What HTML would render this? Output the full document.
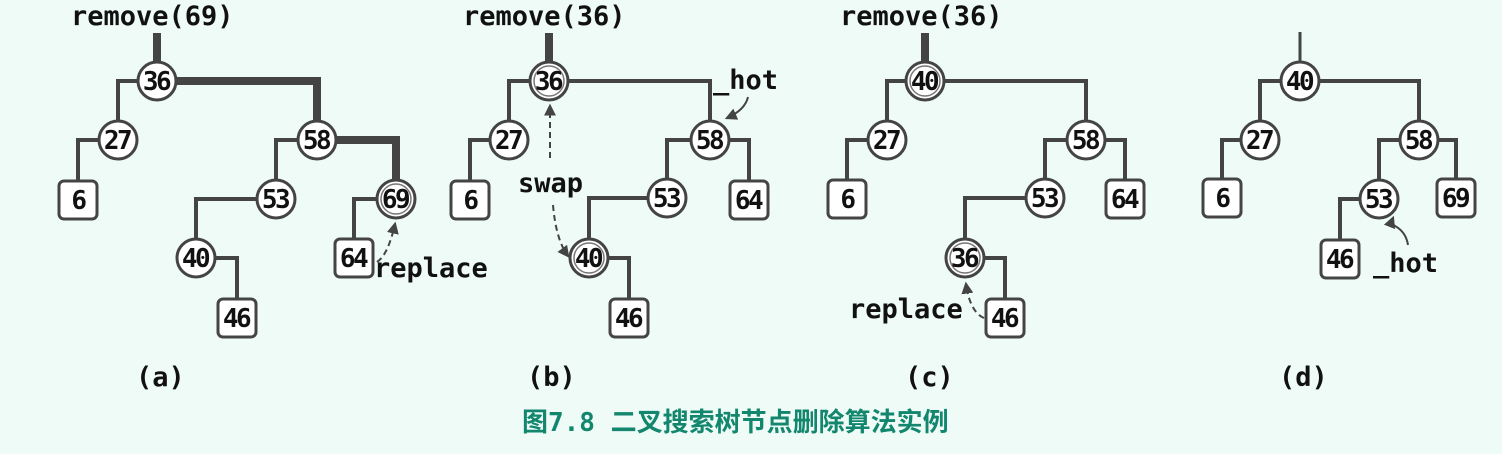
<!DOCTYPE html>
<html><head><meta charset="utf-8"><style>
html,body{margin:0;padding:0;background:#eefbf6;}
svg{display:block;}
text{font-family:"DejaVu Sans Mono","Liberation Mono",monospace;font-weight:bold;fill:#111;}
.n{font-size:26px;text-anchor:middle;letter-spacing:-2.5px;font-weight:bold;}
.l{font-size:27px;}
.e{fill:none;stroke:#444;stroke-width:4;}
.t{fill:none;stroke:#444;stroke-width:8;}
.c{fill:#fff;stroke:#444;stroke-width:3;}
.d{fill:none;stroke:#444;stroke-width:2;stroke-dasharray:6 4;}
</style></head><body>
<svg width="1502" height="454" viewBox="0 0 1502 454">
<defs>
<marker id="ar" viewBox="0 0 10 10" refX="8" refY="5" markerWidth="6" markerHeight="6" orient="auto"><path d="M0,0 L10,5 L0,10 z" fill="#444"/></marker>
</defs>
<!-- Tree (a) -->
<text class="l" x="71" y="25">remove(69)</text>
<path class="t" d="M157 33V62"/>
<path class="e" d="M157 81H118V140 M118 140H78V200 M317 140H276V199 M276 199H196V258 M196 258H237V318 M396 199H354V258"/>
<path class="t" d="M157 81H317V140 M317 140H396V199"/>
<circle class="c" cx="157" cy="81" r="19"/><text class="n" x="156" y="90">36</text>
<circle class="c" cx="118" cy="140" r="19"/><text class="n" x="117" y="149">27</text>
<circle class="c" cx="317" cy="140" r="19"/><text class="n" x="316" y="149">58</text>
<circle class="c" cx="276" cy="199" r="19"/><text class="n" x="275" y="208">53</text>
<circle class="c" cx="396" cy="199" r="19"/><circle cx="396" cy="199" r="15" fill="none" stroke="#777" stroke-width="1.5"/><text class="n" x="395" y="208">69</text>
<circle class="c" cx="196" cy="258" r="19"/><text class="n" x="195" y="267">40</text>
<rect class="c" x="59" y="181" width="38" height="38" rx="5"/><text class="n" x="78" y="209">6</text>
<rect class="c" x="335" y="239" width="38" height="38" rx="5"/><text class="n" x="353" y="267">64</text>
<rect class="c" x="218" y="299" width="38" height="38" rx="5"/><text class="n" x="236" y="327">46</text>
<path class="d" d="M377 262Q388 255 395 224" marker-end="url(#ar)"/>
<text class="l" x="374" y="277">replace</text>
<text class="l" x="136" y="386">(a)</text>

<!-- Tree (b) -->
<text class="l" x="463" y="25">remove(36)</text>
<path class="t" d="M549 33V62"/>
<path class="e" d="M549 81H509V140 M509 140H470V200 M549 81H710V140 M710 140H667V198 M710 140H749V200 M667 198H589V258 M589 258H629V318"/>
<circle class="c" cx="549" cy="81" r="19"/><circle cx="549" cy="81" r="15" fill="none" stroke="#777" stroke-width="1.5"/><text class="n" x="548" y="90">36</text>
<circle class="c" cx="509" cy="140" r="19"/><text class="n" x="508" y="149">27</text>
<circle class="c" cx="710" cy="140" r="19"/><text class="n" x="709" y="149">58</text>
<circle class="c" cx="667" cy="198" r="19"/><text class="n" x="666" y="207">53</text>
<circle class="c" cx="589" cy="258" r="19"/><circle cx="589" cy="258" r="15" fill="none" stroke="#777" stroke-width="1.5"/><text class="n" x="588" y="267">40</text>
<rect class="c" x="451" y="181" width="38" height="38" rx="5"/><text class="n" x="470" y="209">6</text>
<rect class="c" x="730" y="181" width="38" height="38" rx="5"/><text class="n" x="748" y="209">64</text>
<rect class="c" x="610" y="299" width="38" height="38" rx="5"/><text class="n" x="628" y="327">46</text>
<path class="d" d="M550 158V106" marker-end="url(#ar)"/>
<path class="d" d="M553 205Q556 240 568 256" marker-end="url(#ar)"/>
<text class="l" x="518" y="192">swap</text>
<text class="l" x="713" y="89">_hot</text>
<path fill="none" stroke="#444" stroke-width="2" d="M748 97Q745 110 727 118" marker-end="url(#ar)"/>
<text class="l" x="527" y="386">(b)</text>

<!-- Tree (c) -->
<text class="l" x="840" y="25">remove(36)</text>
<path class="t" d="M925 33V62"/>
<path class="e" d="M925 81H887V140 M887 140H847V199 M925 81H1086V140 M1086 140H1045V198 M1086 140H1125V199 M1045 198H965V258 M965 258H1005V318"/>
<circle class="c" cx="925" cy="81" r="19"/><circle cx="925" cy="81" r="15" fill="none" stroke="#777" stroke-width="1.5"/><text class="n" x="924" y="90">40</text>
<circle class="c" cx="887" cy="140" r="19"/><text class="n" x="886" y="149">27</text>
<circle class="c" cx="1086" cy="140" r="19"/><text class="n" x="1085" y="149">58</text>
<circle class="c" cx="1045" cy="198" r="19"/><text class="n" x="1044" y="207">53</text>
<circle class="c" cx="965" cy="258" r="19"/><circle cx="965" cy="258" r="15" fill="none" stroke="#777" stroke-width="1.5"/><text class="n" x="964" y="267">36</text>
<rect class="c" x="828" y="180" width="38" height="38" rx="5"/><text class="n" x="847" y="208">6</text>
<rect class="c" x="1106" y="180" width="38" height="38" rx="5"/><text class="n" x="1124" y="208">64</text>
<rect class="c" x="986" y="299" width="38" height="38" rx="5"/><text class="n" x="1004" y="327">46</text>
<path class="d" d="M984 318Q970 312 966 284" marker-end="url(#ar)"/>
<text class="l" x="849" y="318">replace</text>
<text class="l" x="905" y="386">(c)</text>

<!-- Tree (d) -->
<path class="e" d="M1300 32V62" style="stroke-width:3"/>
<path class="e" d="M1300 81H1260V140 M1260 140H1222V198 M1300 81H1419V140 M1419 140H1379V199 M1419 140H1456V198 M1379 199H1340V258"/>
<circle class="c" cx="1300" cy="81" r="19"/><text class="n" x="1299" y="90">40</text>
<circle class="c" cx="1260" cy="140" r="19"/><text class="n" x="1259" y="149">27</text>
<circle class="c" cx="1419" cy="140" r="19"/><text class="n" x="1418" y="149">58</text>
<circle class="c" cx="1379" cy="199" r="19"/><text class="n" x="1378" y="208">53</text>
<rect class="c" x="1203" y="179" width="38" height="38" rx="5"/><text class="n" x="1222" y="207">6</text>
<rect class="c" x="1437" y="179" width="38" height="38" rx="5"/><text class="n" x="1455" y="207">69</text>
<rect class="c" x="1321" y="240" width="38" height="38" rx="5"/><text class="n" x="1339" y="268">46</text>
<path fill="none" stroke="#444" stroke-width="2" d="M1408 245Q1406 232 1395 226Q1391 223 1393 218" marker-end="url(#ar)"/>
<text class="l" x="1373" y="272">_hot</text>
<text class="l" x="1279" y="386">(d)</text>

<text x="522" y="431" style="font-family:'DejaVu Sans Mono','Noto Sans CJK SC',monospace;font-size:26px;font-weight:bold;fill:#13866e;">图7.8 二叉搜索树节点删除算法实例</text>
</svg>
</body></html>
